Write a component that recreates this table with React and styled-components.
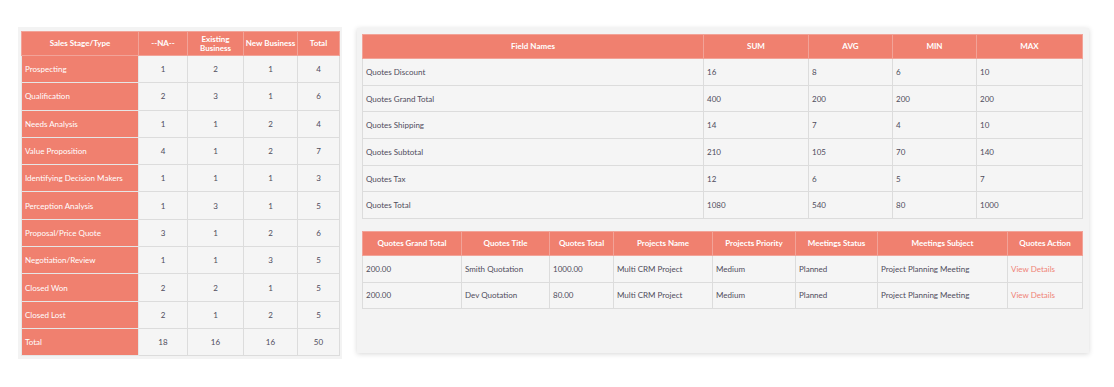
import React from "react";
import styled, { createGlobalStyle } from "styled-components";

const Global = createGlobalStyle`
  html, body {
    margin: 0;
    padding: 0;
    background: #ffffff;
    font-family: Lato, "Open Sans", Arial, sans-serif;
  }
`;

const Page = styled.div`
  display: flex;
  align-items: flex-start;
  gap: 15px;
  padding: 27px 0 0 18px;
  width: 1114px;
  height: 387px;
  box-sizing: border-box;
`;

const Panel = styled.div`
  background: #f3f3f3;
  box-sizing: border-box;
  width: ${(p) => p.width}px;
  height: ${(p) => p.height}px;
  margin-top: ${(p) => p.top || 0}px;
  padding: ${(p) => p.pad};
  box-shadow: ${(p) => (p.raised ? "0 1px 5px rgba(0, 0, 0, 0.16)" : "none")};
  display: flex;
  flex-direction: column;
  gap: 12px;
`;

const Table = styled.table`
  width: 100%;
  table-layout: fixed;
  border-collapse: collapse;
  font-size: 8px;
  color: #4f4c5c;
  border: 1px solid #dcdcdc;
`;

const Head = styled.th`
  background: #f0806f;
  color: #ffffff;
  font-weight: 700;
  text-align: center;
  line-height: 9px;
  height: ${(p) => p.h || 24}px;
  padding: 0;
  white-space: nowrap;
  border: 1px solid #f2a398;
  box-sizing: border-box;
`;

const Cell = styled.td`
  background: #f5f5f5;
  border: 1px solid #dcdcdc;
  height: ${(p) => p.h || 27}px;
  padding: 0 ${(p) => (p.center ? 0 : 3)}px;
  text-align: ${(p) => (p.center ? "center" : "left")};
  box-sizing: border-box;
  white-space: nowrap;
`;

const StageCell = styled(Cell)`
  background: #f0806f;
  color: #ffffff;
  border-color: #e6e6e6;
`;

const Link = styled.a`
  color: #f08377;
  text-decoration: none;
`;

const stages = [
  ["Prospecting", 1, 2, 1, 4],
  ["Qualification", 2, 3, 1, 6],
  ["Needs Analysis", 1, 1, 2, 4],
  ["Value Proposition", 4, 1, 2, 7],
  ["Identifying Decision Makers", 1, 1, 1, 3],
  ["Perception Analysis", 1, 3, 1, 5],
  ["Proposal/Price Quote", 3, 1, 2, 6],
  ["Negotiation/Review", 1, 1, 3, 5],
  ["Closed Won", 2, 2, 1, 5],
  ["Closed Lost", 2, 1, 2, 5],
  ["Total", 18, 16, 16, 50],
];

const stats = [
  ["Quotes Discount", 16, 8, 6, 10],
  ["Quotes Grand Total", 400, 200, 200, 200],
  ["Quotes Shipping", 14, 7, 4, 10],
  ["Quotes Subtotal", 210, 105, 70, 140],
  ["Quotes Tax", 12, 6, 5, 7],
  ["Quotes Total", 1080, 540, 80, 1000],
];

const quotes = [
  ["200.00", "Smith Quotation", "1000.00", "Multi CRM Project", "Medium", "Planned", "Project Planning Meeting"],
  ["200.00", "Dev Quotation", "80.00", "Multi CRM Project", "Medium", "Planned", "Project Planning Meeting"],
];

const quoteCols = [
  ["Quotes Grand Total", 99],
  ["Quotes Title", 88],
  ["Quotes Total", 64],
  ["Projects Name", 99],
  ["Projects Priority", 83],
  ["Meetings Status", 82],
  ["Meetings Subject", 130],
  ["Quotes Action", 75],
];

function StageTable() {
  return (
    <Table>
      <colgroup>
        <col style={{ width: 117 }} />
        <col style={{ width: 49 }} />
        <col style={{ width: 56 }} />
        <col style={{ width: 54 }} />
        <col style={{ width: 42 }} />
      </colgroup>
      <thead>
        <tr>
          <Head h={24}>Sales Stage/Type</Head>
          <Head h={24}>--NA--</Head>
          <Head h={24}>
            Existing
            <br />
            Business
          </Head>
          <Head h={24}>New Business</Head>
          <Head h={24}>Total</Head>
        </tr>
      </thead>
      <tbody>
        {stages.map(([name, ...vals]) => (
          <tr key={name}>
            <StageCell h={27.3}>{name}</StageCell>
            {vals.map((v, i) => (
              <Cell key={i} h={27.3} center>
                {v}
              </Cell>
            ))}
          </tr>
        ))}
      </tbody>
    </Table>
  );
}

function StatsTable() {
  return (
    <Table>
      <colgroup>
        <col style={{ width: 341 }} />
        <col style={{ width: 105 }} />
        <col style={{ width: 84 }} />
        <col style={{ width: 84 }} />
        <col style={{ width: 106 }} />
      </colgroup>
      <thead>
        <tr>
          <Head>Field Names</Head>
          <Head>SUM</Head>
          <Head>AVG</Head>
          <Head>MIN</Head>
          <Head>MAX</Head>
        </tr>
      </thead>
      <tbody>
        {stats.map((row) => (
          <tr key={row[0]}>
            {row.map((v, i) => (
              <Cell key={i} h={26.7}>
                {v}
              </Cell>
            ))}
          </tr>
        ))}
      </tbody>
    </Table>
  );
}

function QuotesTable() {
  return (
    <Table>
      <colgroup>
        {quoteCols.map(([label, w]) => (
          <col key={label} style={{ width: w }} />
        ))}
      </colgroup>
      <thead>
        <tr>
          {quoteCols.map(([label]) => (
            <Head key={label}>{label}</Head>
          ))}
        </tr>
      </thead>
      <tbody>
        {quotes.map((row, r) => (
          <tr key={r}>
            {row.map((v, i) => (
              <Cell key={i} h={26.5}>
                {v}
              </Cell>
            ))}
            <Cell h={26.5}>
              <Link href="#">View Details</Link>
            </Cell>
          </tr>
        ))}
      </tbody>
    </Table>
  );
}

export default function App() {
  return (
    <>
      <Global />
      <Page>
        <Panel width={324} height={332} pad="4px 3px 4px 3px">
          <StageTable />
        </Panel>
        <Panel width={732} height={325} top={1} pad="6px 7px 0 5px" raised>
          <StatsTable />
          <QuotesTable />
        </Panel>
      </Page>
    </>
  );
}
